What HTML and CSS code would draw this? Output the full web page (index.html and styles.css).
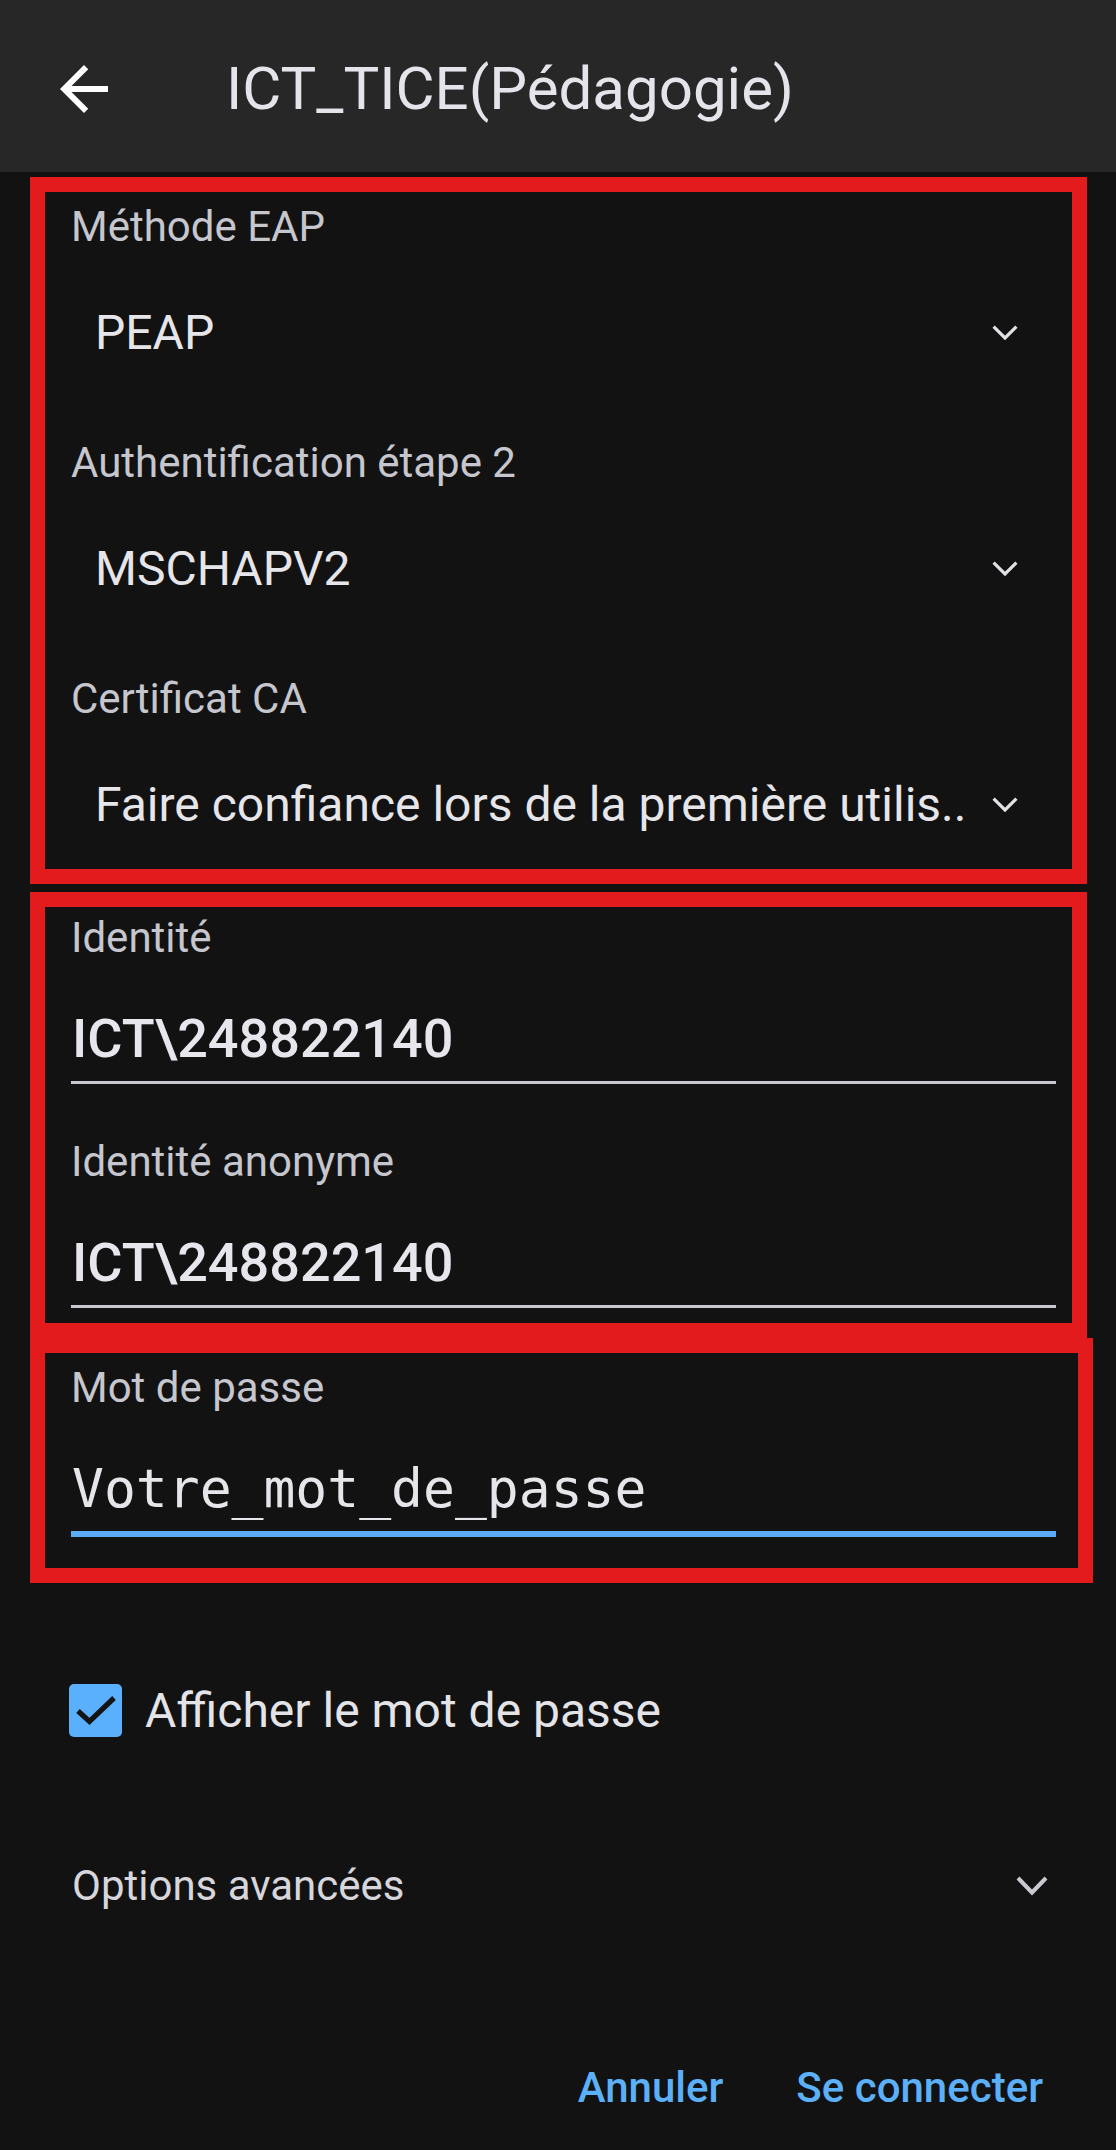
FILE: index.html
```html
<!DOCTYPE html>
<html lang="fr">
<head>
<meta charset="utf-8">
<title>ICT_TICE(Pédagogie)</title>
<link rel="stylesheet" href="styles.css">
</head>
<body>
<header class="appbar">
  <svg class="back" viewBox="0 0 24 24" width="72" height="72"><path d="M20 11H7.83l5.59-5.59L12 4l-8 8 8 8 1.41-1.41L7.83 13H20v-2z" fill="#ffffff"/></svg>
  <h1 class="title">ICT_TICE(Pédagogie)</h1>
</header>

<section class="frame frame-eap">
  <div class="field">
    <div class="label">Méthode EAP</div>
    <div class="select"><span class="select-value">PEAP</span><svg class="chev" viewBox="0 0 26 16" width="26" height="16"><polyline points="1.6,1.6 13,13 24.4,1.6" fill="none" stroke="#e2e2e6" stroke-width="3.2"/></svg></div>
  </div>
  <div class="field">
    <div class="label">Authentification étape 2</div>
    <div class="select"><span class="select-value">MSCHAPV2</span><svg class="chev" viewBox="0 0 26 16" width="26" height="16"><polyline points="1.6,1.6 13,13 24.4,1.6" fill="none" stroke="#e2e2e6" stroke-width="3.2"/></svg></div>
  </div>
  <div class="field">
    <div class="label">Certificat CA</div>
    <div class="select"><span class="select-value">Faire confiance lors de la première utilis..</span><svg class="chev" viewBox="0 0 26 16" width="26" height="16"><polyline points="1.6,1.6 13,13 24.4,1.6" fill="none" stroke="#e2e2e6" stroke-width="3.2"/></svg></div>
  </div>
</section>

<section class="frame frame-id">
  <div class="field">
    <div class="label">Identité</div>
    <div class="input">ICT\248822140</div>
  </div>
  <div class="field">
    <div class="label">Identité anonyme</div>
    <div class="input">ICT\248822140</div>
  </div>
</section>

<section class="frame frame-pw">
  <div class="field">
    <div class="label">Mot de passe</div>
    <div class="input input-pw">Votre_mot_de_passe</div>
  </div>
</section>

<div class="check-row">
  <svg class="checkbox" viewBox="0 0 53 53" width="53" height="53"><rect x="0" y="0" width="53" height="53" rx="5" fill="#5ab0fc"/><polyline points="9,27 20.5,37.5 45,14" fill="none" stroke="#141414" stroke-width="5.2"/></svg>
  <span class="check-label">Afficher le mot de passe</span>
</div>

<div class="options-row">
  <span class="options-label">Options avancées</span>
  <svg class="chev-lg" viewBox="0 0 32 20" width="32" height="20"><polyline points="2,2 16,16.5 30,2" fill="none" stroke="#c9c9d0" stroke-width="4"/></svg>
</div>

<div class="actions">
  <span class="btn">Annuler</span>
  <span class="btn">Se connecter</span>
</div>
</body>
</html>
```

FILE: styles.css
```css
html, body {
  margin: 0;
  padding: 0;
  background: #121212;
}
body {
  width: 1116px;
  min-height: 2150px;
  font-family: Roboto, "Noto Sans", sans-serif;
  color: #e4e4e8;
}
.appbar {
  box-sizing: border-box;
  height: 172px;
  padding-top: 6px;
  background: #272727;
  display: flex;
  align-items: center;
}
.back {
  margin-left: 48px;
  flex: none;
}
.title {
  margin: 0 0 0 106px;
  font-size: 60px;
  line-height: 70px;
  font-weight: 400;
  color: #e4e4ea;
}
.frame {
  box-sizing: border-box;
  border: 15px solid #e31b1c;
  margin-left: 30px;
}
.frame-eap {
  width: 1057px;
  margin-top: 5px;
  padding: 10px 54px 35px 26px;
  display: flex;
  flex-direction: column;
  gap: 76px;
}
.frame-id {
  width: 1057px;
  margin-top: 8px;
  padding: 6px 16px 15px 26px;
  display: flex;
  flex-direction: column;
  gap: 53px;
}
.frame-pw {
  width: 1063px;
  padding: 10px 22px 31px 26px;
}
.label {
  font-size: 42px;
  line-height: 50px;
  color: #c6c6ce;
}
.select {
  margin-top: 52px;
  height: 58px;
  padding-left: 24px;
  display: flex;
  align-items: center;
  gap: 20px;
}
.select-value {
  flex: 1;
  min-width: 0;
  font-size: 48px;
  line-height: 58px;
  white-space: nowrap;
  color: #e6e6ea;
}
.chev {
  flex: none;
}
.input {
  margin-top: 45px;
  font-size: 54px;
  line-height: 62px;
  font-weight: 500;
  color: #e6e6ec;
  padding-bottom: 11px;
  border-bottom: 3px solid #c8c8d0;
  padding-left: 1px;
}
.input-pw {
  font-family: "DejaVu Sans Mono", "Liberation Mono", monospace;
  font-weight: 400;
  font-size: 53px;
  color: #e6e6ea;
  border-bottom: 6px solid #5aabf5;
}
.check-row {
  margin-top: 101px;
  padding-left: 69px;
  height: 53px;
  display: flex;
  align-items: center;
  gap: 23px;
}
.checkbox {
  flex: none;
}
.check-label {
  font-size: 48px;
  line-height: 56px;
  color: #e4e4e8;
}
.options-row {
  margin-top: 124px;
  height: 50px;
  padding: 0 68px 0 72px;
  display: flex;
  align-items: center;
  justify-content: space-between;
}
.options-label {
  font-size: 42px;
  line-height: 50px;
  color: #d6d6dc;
}
.actions {
  margin-top: 152px;
  height: 50px;
  padding-right: 73px;
  display: flex;
  justify-content: flex-end;
  gap: 73px;
}
.btn {
  font-size: 42px;
  line-height: 50px;
  font-weight: 500;
  color: #5cb0f7;
}
```
